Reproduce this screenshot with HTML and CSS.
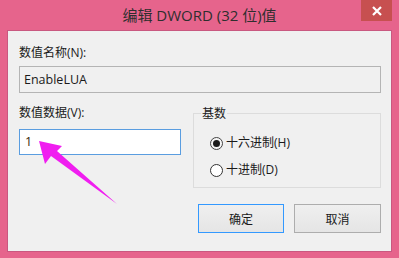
FILE: index.html
```html
<!DOCTYPE html>
<html>
<head>
<meta charset="utf-8">
<link rel="stylesheet" href="styles.css">
</head>
<body>
<div class="window">
  <div class="titlebar">
    <div class="title">编辑 DWORD (32 位)值</div>
    <div class="close">
      <svg width="10" height="10" viewBox="0 0 10 10"><path d="M1 1 L9 9 M9 1 L1 9" stroke="#fff" stroke-width="2.2"/></svg>
    </div>
  </div>
  <div class="client">
    <div class="label lbl-name">数值名称(N):</div>
    <div class="field readonly">EnableLUA</div>
    <div class="row">
      <div class="col-left">
        <div class="label">数值数据(V):</div>
        <div class="field focus">1</div>
      </div>
      <div class="group">
        <div class="legend">基数</div>
        <div class="radio-row first"><span class="radio checked"></span><span>十六进制(H)</span></div>
        <div class="radio-row"><span class="radio"></span><span>十进制(D)</span></div>
      </div>
    </div>
    <div class="buttons">
      <div class="btn default">确定</div>
      <div class="btn cancel">取消</div>
    </div>
  </div>
  <svg class="arrow" width="399" height="258" viewBox="0 0 399 258">
    <polygon points="39,141 62,146 57,151 117,204 51,156 45,164" fill="#f01ef0"/>
  </svg>
</div>
</body>
</html>
```
FILE: styles.css
```css
html, body {
  margin: 0;
  padding: 0;
}
body {
  width: 399px;
  height: 258px;
  overflow: hidden;
  font-family: "Open Sans", "Noto Sans CJK SC", sans-serif;
  font-size: 12px;
  color: #1a1a1a;
}
.window {
  position: relative;
  width: 399px;
  height: 258px;
  background: #e6648c;
  display: flex;
  flex-direction: column;
  box-sizing: border-box;
}
.titlebar {
  height: 30px;
  display: grid;
  grid-template-columns: 1fr;
  flex: none;
}
.title {
  grid-area: 1 / 1;
  text-align: center;
  font-size: 15px;
  line-height: 30px;
  color: #2e2e2e;
}
.close {
  grid-area: 1 / 1;
  justify-self: end;
  align-self: start;
  margin-right: 7px;
  width: 31px;
  height: 21px;
  background: #c75050;
  display: flex;
  align-items: center;
  justify-content: center;
}
.close svg {
  display: block;
  margin-top: 1px;
}
.client {
  margin: 0 7px 6px 7px;
  border: 1px solid #c95880;
  background: #f0f0f0;
  flex: 1;
  padding: 14px 10px 0 11px;
  box-sizing: border-box;
}
.label {
  line-height: 16px;
  height: 16px;
  color: #1a1a1a;
}
.lbl-name {
  margin-bottom: 5px;
}
.field {
  box-sizing: border-box;
  border: 1px solid #b4b4b4;
  height: 27px;
  line-height: 25px;
  padding-left: 4px;
  font-size: 12.5px;
}
.readonly {
  background: #f0f0f0;
  width: 362px;
}
.row {
  display: flex;
  margin-top: 12px;
}
.col-left {
  width: 162px;
}
.col-left .label {
  margin-bottom: 8px;
}
.focus {
  border-color: #5a9de0;
  background: #fff;
  width: 162px;
  height: 26px;
  line-height: 24px;
  padding-left: 5px;
  color: #3b2508;
}
.group {
  margin-left: 12px;
  margin-top: 8px;
  width: 189px;
  height: 75px;
  box-sizing: border-box;
  border: 1px solid #dcdcdc;
  padding-left: 16px;
}
.legend {
  display: inline-block;
  margin-top: -8px;
  margin-left: -9px;
  padding: 0 1px;
  background: #f0f0f0;
  line-height: 16px;
  height: 16px;
  vertical-align: top;
}
.radio-row {
  display: flex;
  align-items: center;
  gap: 3px;
  height: 16px;
  line-height: 16px;
}
.radio-row.first {
  margin-top: 4px;
}
.radio-row + .radio-row {
  margin-top: 11px;
}
.radio {
  box-sizing: border-box;
  width: 13px;
  height: 13px;
  border-radius: 50%;
  border: 1px solid #333;
  background: #fff;
  display: flex;
  align-items: center;
  justify-content: center;
  flex: none;
}
.radio.checked {
  background: #f4f4f4;
  border-color: #444;
}
.radio.checked::after {
  content: "";
  width: 7px;
  height: 7px;
  border-radius: 50%;
  background: #1a1a1a;
}
.buttons {
  display: flex;
  justify-content: flex-end;
  gap: 10px;
  margin-top: 16px;
}
.btn {
  box-sizing: border-box;
  height: 29px;
  width: 86px;
  display: flex;
  align-items: center;
  justify-content: center;
  background: linear-gradient(#efefef, #e5e5e5);
  border: 1px solid #adadad;
  color: #1a1a1a;
}
.btn.default {
  border-color: #3399ff;
}
.btn.cancel {
  width: 87px;
}
.arrow {
  position: absolute;
  left: 0;
  top: 0;
  pointer-events: none;
}
```
